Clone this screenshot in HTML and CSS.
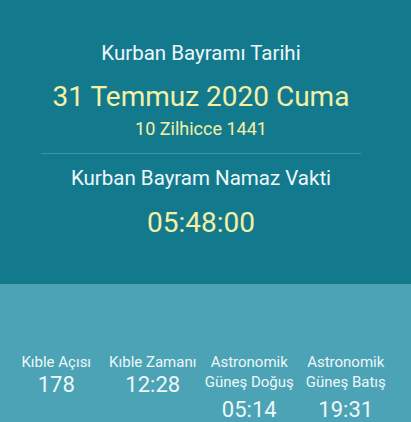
FILE: index.html
```html
<!DOCTYPE html>
<html lang="tr">
<head>
<meta charset="utf-8">
<title>Kurban Bayramı</title>
<link rel="stylesheet" href="styles.css">
</head>
<body>
  <section class="feast">
    <div class="inner">
      <h1 class="label title">Kurban Bayramı Tarihi</h1>
      <div class="accent date">31 Temmuz 2020 Cuma</div>
      <div class="accent hijri">10 Zilhicce 1441</div>
      <hr class="divider">
      <h2 class="label prayer">Kurban Bayram Namaz Vakti</h2>
      <div class="accent time">05:48:00</div>
    </div>
  </section>
  <section class="facts">
    <div class="grid">
      <div class="fact">
        <div class="fact-label">Kıble Açısı</div>
        <div class="fact-value">178</div>
      </div>
      <div class="fact">
        <div class="fact-label">Kıble Zamanı</div>
        <div class="fact-value">12:28</div>
      </div>
      <div class="fact fact--two-line">
        <div class="fact-label">Astronomik<br>Güneş Doğuş</div>
        <div class="fact-value">05:14</div>
      </div>
      <div class="fact fact--two-line">
        <div class="fact-label">Astronomik<br>Güneş Batış</div>
        <div class="fact-value">19:31</div>
      </div>
    </div>
  </section>
</body>
</html>
```

FILE: styles.css
```css
html, body {
  margin: 0;
  padding: 0;
}

body {
  width: 411px;
  height: 422px;
  overflow: hidden;
  font-family: Roboto, "Noto Sans", sans-serif;
  font-weight: 400;
  background: #4ba3b5;
}

/* upper panel: feast date and prayer time */
.feast {
  background: #137a8e;
  height: 284px;
  box-sizing: border-box;
  padding-top: 41px;
}

.inner {
  width: 402px;
  text-align: center;
}

.label {
  margin: 0;
  font-weight: 400;
  font-size: 20.5px;
  line-height: 24px;
  color: #eef8fa;
}

.accent {
  color: #f4f0a6;
}

.date {
  margin-top: 15px;
  font-size: 28px;
  line-height: 34px;
}

.hijri {
  margin-top: 4px;
  font-size: 18px;
  line-height: 22px;
}

.divider {
  margin: 13px 41px 0;
  height: 1px;
  border: 0;
  background: #3d94a5;
}

.prayer {
  margin-top: 12px;
}

.time {
  margin-top: 16px;
  font-size: 28px;
  line-height: 34px;
}

/* lower panel: qibla and sun facts */
.facts {
  height: 138px;
  box-sizing: border-box;
  padding-top: 68px;
}

.grid {
  width: 402px;
  box-sizing: border-box;
  padding: 0 8px;
  display: grid;
  grid-template-columns: repeat(4, 1fr);
}

.fact {
  display: flex;
  flex-direction: column;
  align-items: center;
  text-align: center;
  color: #eef8fa;
  white-space: nowrap;
}

.fact-label {
  font-size: 15px;
  line-height: 20px;
}

.fact-value {
  font-size: 22px;
  line-height: 26px;
}

.fact--two-line .fact-value {
  margin-top: 5px;
}
```
